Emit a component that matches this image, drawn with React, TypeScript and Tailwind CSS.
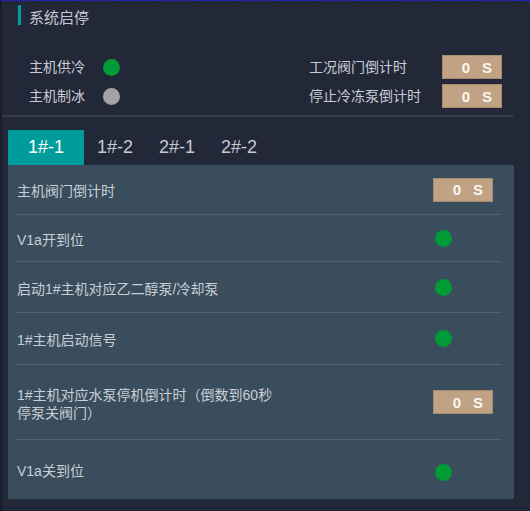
const FONT = { fontFamily: '"Liberation Sans", "Noto Sans CJK SC", sans-serif' };

type RowKind = 'box' | 'dot';

interface PanelRow {
  label: React.ReactNode;
  kind: RowKind;
  height: string;
}

const rows: PanelRow[] = [
  { label: '主机阀门倒计时', kind: 'box', height: 'h-[50px]' },
  { label: 'V1a开到位', kind: 'dot', height: 'h-[47px]' },
  { label: '启动1#主机对应乙二醇泵/冷却泵', kind: 'dot', height: 'h-[51px]' },
  { label: '1#主机启动信号', kind: 'dot', height: 'h-[52px]' },
  {
    label: (
      <>
        1#主机对应水泵停机倒计时（倒数到60秒
        <br />
        停泵关阀门）
      </>
    ),
    kind: 'box',
    height: 'h-[75px]',
  },
  { label: 'V1a关到位', kind: 'dot', height: 'h-[59px]' },
];

function TimeBox() {
  return (
    <div className="flex h-[24px] w-[60px] items-center justify-end gap-[12px] border border-[#a78b70] bg-[#c1a284] pr-[9px] text-[15px] leading-none font-semibold text-[#fbf6ee]">
      <span>0</span>
      <span>S</span>
    </div>
  );
}

function Dot({ on = true }: { on?: boolean }) {
  return <div className={`h-[17px] w-[17px] rounded-full ${on ? 'bg-[#009a36]' : 'bg-[#a3a3a5]'}`} />;
}

export default function App() {
  const tabs = ['1#-1', '1#-2', '2#-1', '2#-2'];

  return (
    <div className="h-[511px] w-[530px] overflow-hidden border-l-2 border-[#1a1e2b] bg-[#232839]" style={FONT}>
      <div className="border-t border-dashed border-[#1f1fff]" />

      <div className="mt-[4px] flex h-[20px] items-end pl-[16px]">
        <div className="h-[20px] w-[3px] bg-[#00a19b]" />
        <span className="ml-[8px] text-[15px] leading-none text-[#c3c7cf]">系统启停</span>
      </div>

      <div className="mt-[30px] flex flex-col gap-[5px] pl-[27px] text-[14px] text-[#c8ccd4]">
        <div className="flex h-[24px] items-center">
          <div className="flex w-[280px] items-center">
            <span className="w-[74px]">主机供冷</span>
            <Dot />
          </div>
          <span className="w-[133px]">工况阀门倒计时</span>
          <TimeBox />
        </div>
        <div className="flex h-[24px] items-center">
          <div className="flex w-[280px] items-center">
            <span className="w-[74px]">主机制冰</span>
            <Dot on={false} />
          </div>
          <span className="w-[133px]">停止冷冻泵倒计时</span>
          <TimeBox />
        </div>
      </div>

      <div className="mt-[7px] mr-[17px] h-[2px] bg-[#383d4e]" />

      <div className="mt-[13px] ml-[6px] flex h-[35px] items-stretch text-[18px]">
        {tabs.map((t, i) => (
          <div
            key={t}
            className={
              i === 0
                ? 'flex w-[76px] items-center justify-center bg-[#009b9b] text-white'
                : 'flex items-center px-[13px] text-[#c5cad3]'
            }
          >
            {t}
          </div>
        ))}
      </div>

      <div className="ml-[6px] h-[334px] w-[506px] bg-[#3a4d5c] pr-[13px] pl-[8px] text-[14px] text-[#c9cfd6]">
        {rows.map((r, i) => (
          <div
            key={i}
            className={`flex items-center justify-between ${r.height} ${i < rows.length - 1 ? 'border-b border-[#506170]' : ''}`}
          >
            <div className="pt-[3px] pl-[1px] leading-[18px]">{r.label}</div>
            <div className={`flex w-[68px] items-center ${i === rows.length - 1 ? 'pt-[5px]' : ''}`}>
              {r.kind === 'box' ? <TimeBox /> : <div className="ml-[2px]"><Dot /></div>}
            </div>
          </div>
        ))}
      </div>
    </div>
  );
}
